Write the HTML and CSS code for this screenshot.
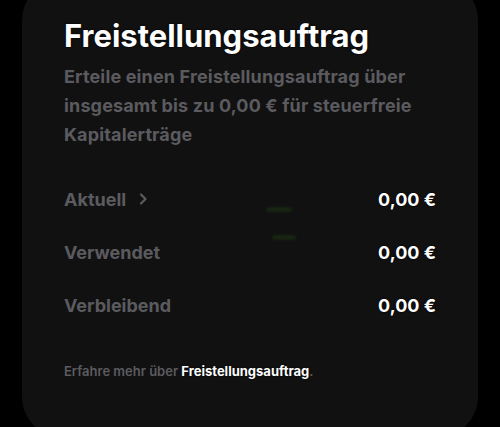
FILE: index.html
```html
<!DOCTYPE html>
<html lang="de">
<head>
<meta charset="utf-8">
<link rel="stylesheet" href="styles.css">
</head>
<body>
<div class="card">
  <h1 class="title">Freistellungsauftrag</h1>
  <p class="desc">Erteile einen Freistellungsauftrag über insgesamt bis zu 0,00 € für steuerfreie Kapitalerträge</p>
  <div class="rows">
    <div class="row">
      <span class="label">Aktuell <svg class="chev" width="10" height="14" viewBox="0 0 10 14"><path d="M3 2.5 L7.5 7 L3 11.5" fill="none" stroke="currentColor" stroke-width="2.2" stroke-linecap="round" stroke-linejoin="round"/></svg></span>
      <span class="value">0,00 €</span>
    </div>
    <div class="row">
      <span class="label">Verwendet</span>
      <span class="value">0,00 €</span>
    </div>
    <div class="row">
      <span class="label">Verbleibend</span>
      <span class="value">0,00 €</span>
    </div>
  </div>
  <p class="more">Erfahre mehr über <a class="link">Freistellungsauftrag</a>.</p>
  <div class="dash dash1"></div>
  <div class="dash dash2"></div>
</div>
</body>
</html>
```
FILE: styles.css
```css
html, body {
  margin: 0;
  padding: 0;
  background: #000;
  font-family: Inter, "Noto Sans", sans-serif;
}
body {
  width: 500px;
  height: 427px;
  overflow: hidden;
}
.card {
  position: relative;
  margin: -20px 22px 0 22px;
  height: 457px;
  background: #111112;
  border-radius: 40px;
  padding: 38px 42px 0 42px;
  box-sizing: border-box;
}
.title {
  margin: 0;
  font-size: 31px;
  line-height: 36px;
  font-weight: 700;
  color: #fff;
  letter-spacing: 0;
  text-shadow: 0 0 2px #000, 0 0 1px #000;
}
.desc {
  margin: 8px 0 0 0;
  font-size: 18px;
  line-height: 29px;
  font-weight: 700;
  letter-spacing: 0.15px;
  color: #5b5b5f;
}
.rows {
  margin-top: 39px;
  display: flex;
  flex-direction: column;
  gap: 31px;
}
.row {
  display: flex;
  justify-content: space-between;
  align-items: center;
  height: 22px;
  font-size: 18px;
  font-weight: 700;
}
.label {
  color: #5b5b5f;
  display: flex;
  align-items: center;
  gap: 12px;
}
.chev { color: #5b5b5f; }
.value {
  color: #fff;
  text-shadow: 0 0 2px #000, 0 0 1px #000;
}
.more {
  margin: 47px 0 0 0;
  font-size: 13px;
  font-weight: 600;
  color: #5b5b5f;
}
.link {
  color: #fff;
  font-weight: 700;
  text-shadow: 0 0 2px #000;
}
.dash {
  position: absolute;
  height: 5px;
  border-radius: 3px;
  background: #182510;
  filter: blur(1px);
}
.dash1 { left: 244px; top: 227px; width: 26px; }
.dash2 { left: 250px; top: 255px; width: 24px; }
```
